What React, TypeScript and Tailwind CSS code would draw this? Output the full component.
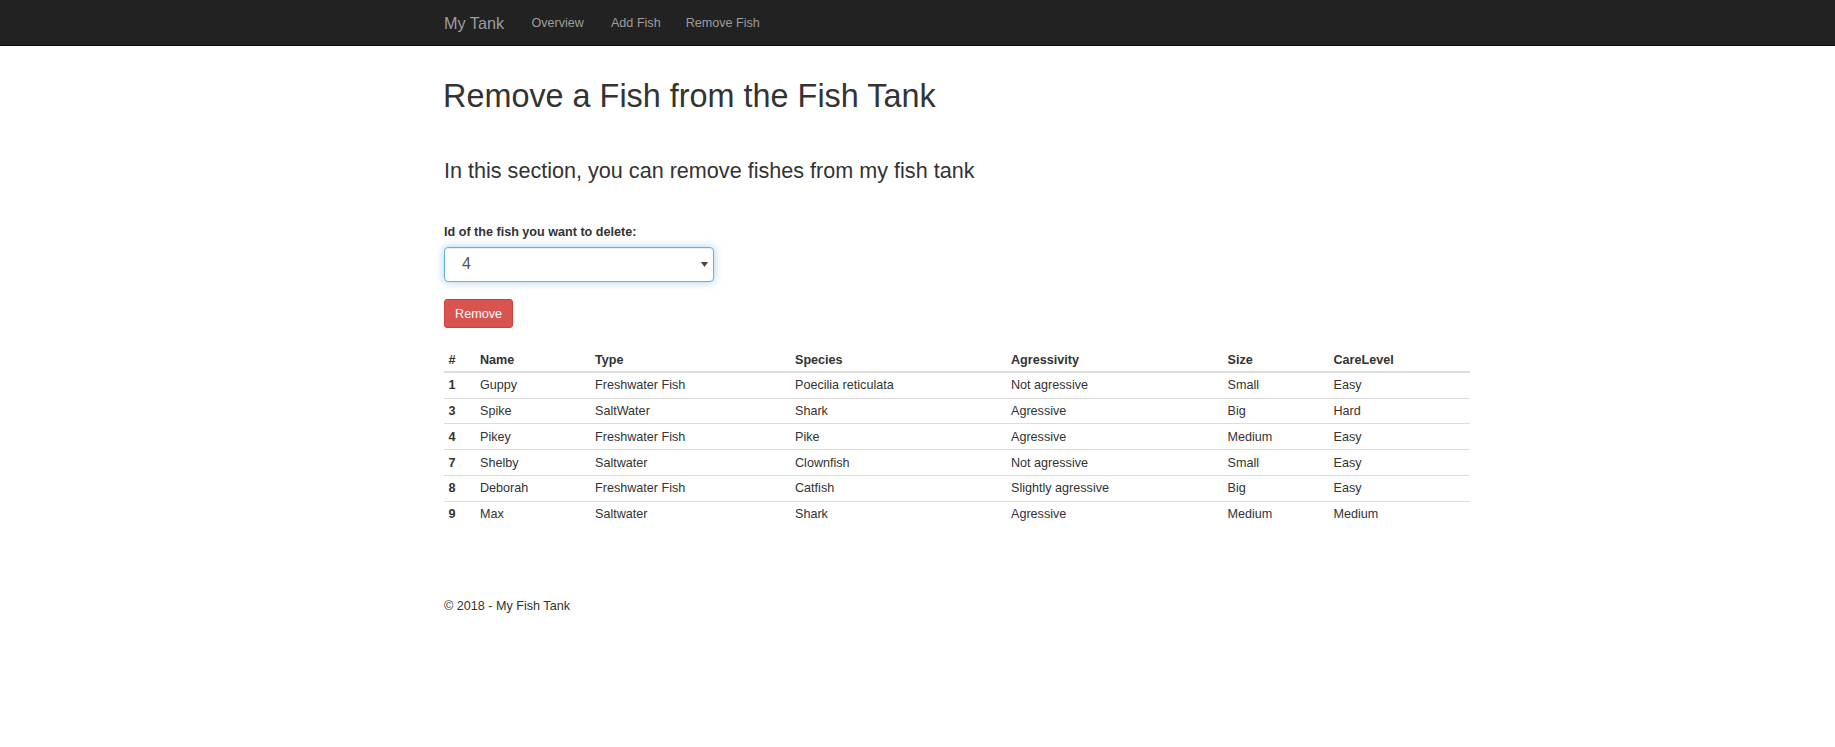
import React from "react";

const rows = [
  ["1", "Guppy", "Freshwater Fish", "Poecilia reticulata", "Not agressive", "Small", "Easy"],
  ["3", "Spike", "SaltWater", "Shark", "Agressive", "Big", "Hard"],
  ["4", "Pikey", "Freshwater Fish", "Pike", "Agressive", "Medium", "Easy"],
  ["7", "Shelby", "Saltwater", "Clownfish", "Not agressive", "Small", "Easy"],
  ["8", "Deborah", "Freshwater Fish", "Catfish", "Slightly agressive", "Big", "Easy"],
  ["9", "Max", "Saltwater", "Shark", "Agressive", "Medium", "Medium"],
];

const headers = ["#", "Name", "Type", "Species", "Agressivity", "Size", "CareLevel"];
const widths = ["w-[31.5px]", "w-[115px]", "w-[200px]", "w-[216px]", "w-[216.5px]", "w-[106px]", "w-[141px]"];

export default function App() {
  return (
    <div className="min-h-[747px] bg-white text-[#333] font-['Liberation_Sans',Arial,sans-serif] text-[12.6px] leading-[18px]">
      <nav className="h-[46px] bg-[#222] border-b border-[#080808]">
        <div className="ml-[444px] flex h-full items-center text-[#9d9d9d]">
          <span className="text-[16.2px]">My Tank</span>
          <span className="ml-[27.5px]">Overview</span>
          <span className="ml-[27px]">Add Fish</span>
          <span className="ml-[25px]">Remove Fish</span>
        </div>
      </nav>
      <main className="ml-[444px] w-[1026px]">
        <h1 className="mt-[33px] -ml-[1px] text-[32.4px] leading-[35.6px] font-normal">Remove a Fish from the Fish Tank</h1>
        <h3 className="mt-[44px] text-[21.6px] leading-[23.8px] font-normal">In this section, you can remove fishes from my fish tank</h3>
        <label className="block mt-[41px] font-bold">Id of the fish you want to delete:</label>
        <div className="mt-[5.5px] relative w-[270px] h-[35px] rounded-[4px] border border-[#66afe9] shadow-[inset_0_1px_1px_rgba(0,0,0,0.075),0_0_8px_rgba(102,175,233,0.6)] bg-white flex items-center">
          <span className="pl-[17px] text-[16px] text-[#555]">4</span>
          <svg className="absolute right-[5px] top-[14px]" width="7" height="5" viewBox="0 0 7 5">
            <polygon points="0,0 7,0 3.5,5" fill="#444" />
          </svg>
        </div>
        <button className="mt-[17.5px] h-[29px] w-[69px] rounded-[3px] bg-[#d9534f] border border-[#d43f3a] text-white text-[12.6px] flex items-center justify-center">
          Remove
        </button>
        <div className="mt-[20px]">
          <div className="flex h-[24.8px] border-b-2 border-[#ddd] font-bold items-center">
            {headers.map((h, i) => (
              <div key={h} className={`${widths[i]} shrink-0 pl-[4.5px]`}>{h}</div>
            ))}
          </div>
          {rows.map((r, ri) => (
            <div
              key={ri}
              className={ri === 0 ? "flex h-[24.5px] items-center" : "flex h-[25.75px] items-center border-t border-[#ddd]"}
            >
              {r.map((c, i) => (
                <div key={i} className={`${widths[i]} shrink-0 pl-[4.5px] ${i === 0 ? "font-bold" : ""}`}>{c}</div>
              ))}
            </div>
          ))}
        </div>
        <footer className="mt-[70.5px]">© 2018 - My Fish Tank</footer>
      </main>
    </div>
  );
}
